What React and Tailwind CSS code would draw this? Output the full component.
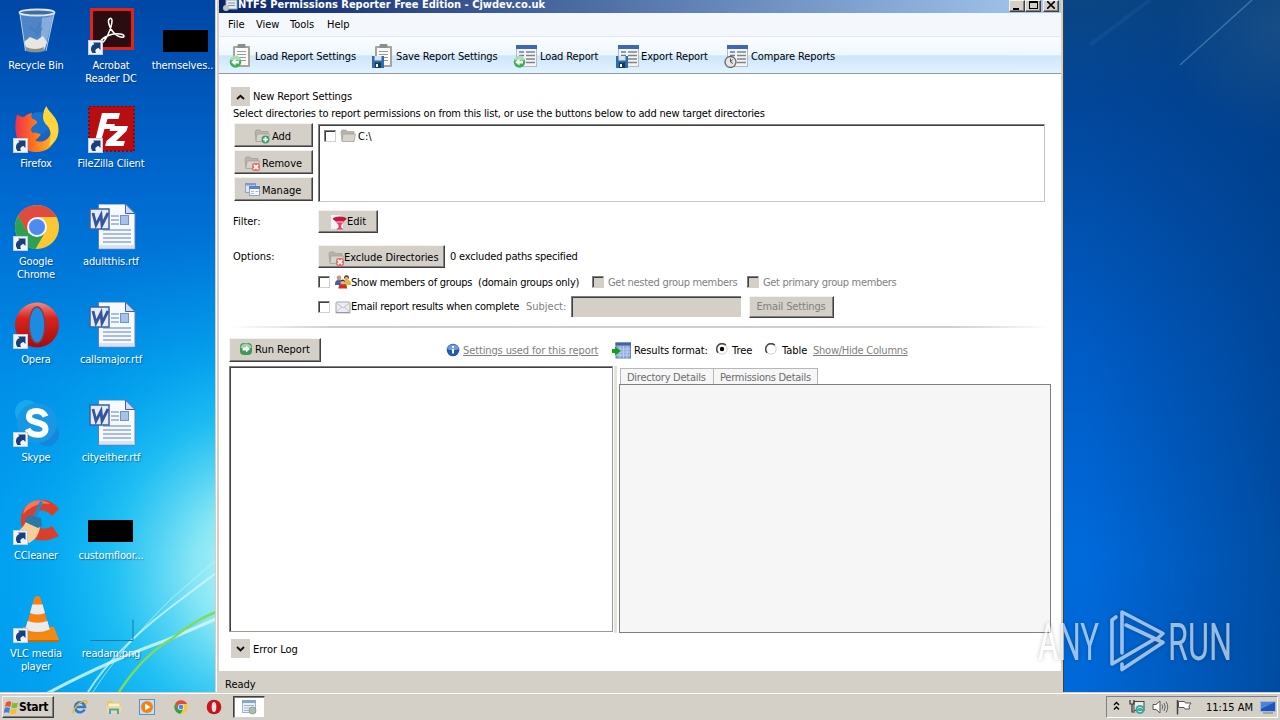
const FONT = "font-['DejaVu_Sans_Condensed','DejaVu_Sans',sans-serif]";

/* ---------- small window controls ---------- */

const Txt = ({ className = "", children }) => (
  <span className={`whitespace-pre leading-[13px] shrink-0 block ${className}`}>{children}</span>
);

const Button = ({ className = "", children }) => (
  <button
    className={`bg-[#d4d0c8] border border-t-[#f4f2ef] border-l-[#f4f2ef] border-r-[#404040] border-b-[#404040] shadow-[inset_-1px_-1px_0_#808080] flex items-center shrink-0 ${className}`}
  >
    {children}
  </button>
);

const Check = ({ disabled, className = "" }) => (
  <span
    className={`block w-[12px] h-[12px] shrink-0 border border-t-[#808080] border-l-[#808080] border-r-[#d4d0c8] border-b-[#d4d0c8] shadow-[inset_1px_1px_0_#404040] ${
      disabled ? "bg-[#d4d0c8]" : "bg-white"
    } ${className}`}
  />
);

const Radio = ({ checked, className = "" }) => (
  <svg viewBox="0 0 12 12" className={`w-[12px] h-[12px] shrink-0 ${className}`}>
    <circle cx="6" cy="6" r="5.2" fill="#fff" stroke="#d4d0c8" />
    <path d="M2.2 9.8A5.2 5.2 0 0 1 9.8 2.2" fill="none" stroke="#4a4845" strokeWidth="1.5" />
    {checked && <circle cx="6" cy="6" r="2.2" fill="#000" />}
  </svg>
);

const Expander = ({ up }) => (
  <span className="w-[19px] h-[19px] shrink-0 bg-[#d4d0c8] flex items-center justify-center">
    <svg viewBox="0 0 9 6" className="w-[9px] h-[6px]">
      <path d={up ? "M1 5L4.5 1.8 8 5" : "M1 1L4.5 4.4 8 1"} fill="none" stroke="#111" strokeWidth="1.9" />
    </svg>
  </span>
);

/* ---------- toolbar icons ---------- */

const Clipboard = () => (
  <g>
    <rect x="4" y="2" width="17" height="21" rx="1" fill="#aaa497" />
    <rect x="6" y="4" width="13" height="17" fill="#fafafa" />
    <rect x="8.5" y="0" width="8" height="4" rx="1" fill="#8d8d8d" />
    <path d="M8 7.500h9M8 10.500h9M8 13.500h9M8 16.500h9" stroke="#9a9a9a" />
  </g>
);

const Sheet = () => (
  <g>
    <rect x="3.500" y="1.500" width="20" height="21" fill="#f4f4f4" stroke="#b5b9c2" />
    <rect x="3" y="1" width="21" height="4" fill="#3f68b0" />
    <path d="M6 8h5M6 11.500h5M6 15h5M6 18.500h5" stroke="#5f7cb4" strokeWidth="1.600" />
    <path d="M13 8h9M13 11.500h9M13 15h9M13 18.500h9" stroke="#7f838b" strokeWidth="1.600" />
  </g>
);

const GreenArrow = () => (
  <g>
    <circle cx="6.500" cy="18" r="5.800" fill="#3fae5a" />
    <path d="M1.500 16.500a5 5 0 0 1 10 0z" fill="#a6dfb2" />
    <path d="M10 17H6.500v-2.200l-4.300 3.400 4.300 3.400v-2.200H10z" fill="#fff" />
  </g>
);

const Floppy = () => (
  <g>
    <rect x="1" y="12" width="12" height="12" fill="#2f6ba6" />
    <rect x="3.500" y="12" width="7" height="4.500" fill="#d5e2ee" />
    <rect x="4" y="18.500" width="6" height="5.500" fill="#16395f" />
    <rect x="5" y="20" width="2" height="3" fill="#fff" />
  </g>
);

const Clock = () => (
  <g>
    <circle cx="6.500" cy="18" r="5.500" fill="#e6e6e6" stroke="#666" strokeWidth="1.300" />
    <path d="M6.500 14.500V18l2.500 1.500M6.500 18l2-2.500" stroke="#555" fill="none" />
  </g>
);

const ToolItem = ({ base, badge, label, className }) => (
  <div className={`flex items-center shrink-0 ${className}`}>
    <svg viewBox="0 0 24 24" className="w-[24px] h-[24px] shrink-0">
      {base}
      {badge}
    </svg>
    <Txt className="tracking-[-0.12px]">{label}</Txt>
  </div>
);

/* ---------- form icons ---------- */

const FolderIcon = ({ badge, className = "" }) => (
  <svg viewBox="0 0 16 16" className={`w-[16px] h-[16px] shrink-0 ${className}`}>
    <path d="M1 4l1-2h4l1 1.500h7V13H2z" fill="#b9b4ad" stroke="#98938c" strokeWidth=".6" />
    <path d="M3 6h12.500L14 13.500H2z" fill="#d6d2cc" stroke="#9b9690" strokeWidth=".6" />
    {badge === "add" && (
      <g>
        <circle cx="11.500" cy="11.500" r="4" fill="#3f9f68" />
        <path d="M11.500 9v5M9 11.500h5" stroke="#fff" strokeWidth="1.700" />
      </g>
    )}
    {badge === "del" && (
      <g>
        <rect x="8" y="8" width="8" height="8" rx="2.500" fill="#e0726c" />
        <path d="M9.800 9.800l4.400 4.400M14.200 9.800l-4.400 4.400" stroke="#fff" strokeWidth="1.700" />
      </g>
    )}
  </svg>
);

const ManageIcon = () => (
  <svg viewBox="0 0 16 16" className="w-[16px] h-[16px] shrink-0">
    <rect x="1.500" y="1.500" width="10" height="9" fill="#dfe6f1" stroke="#93a3bf" />
    <rect x="1" y="1" width="11" height="2.500" fill="#7b9bd0" />
    <rect x="5.500" y="4.500" width="10" height="9" fill="#f4f7fb" stroke="#93a3bf" />
    <rect x="5" y="4" width="11" height="3" fill="#5b82c8" />
    <path d="M7 9.500h3M7 11.500h3M11.500 9.500h3" stroke="#a9b6cc" />
  </svg>
);

const FilterIcon = () => (
  <svg viewBox="0 0 16 16" className="w-[16px] h-[16px] shrink-0">
    <path d="M0 1h9l3 3v11H0z" fill="#f5f3f3" />
    <path d="M2 4.500h13.500l-5.300 6.500v2.500l2.500 2h-7.500L7.500 13.500V11z" fill="#e0456c" />
    <ellipse cx="8.700" cy="4.800" rx="6.800" ry="2.300" fill="#c01b45" />
    <path d="M5.500 8h6.500" stroke="#f5a3b7" strokeWidth="1.200" />
  </svg>
);

const GroupIcon = () => (
  <svg viewBox="0 0 16 16" className="w-[16px] h-[16px] shrink-0">
    <path d="M0 11c0-4 1-5 4-5s4 1 4 5z" fill="#3c5fae" />
    <circle cx="4" cy="4" r="2.400" fill="#c99d77" />
    <path d="M8 11c0-4 1-5 4-5s4 1 4 5z" fill="#e0b832" />
    <circle cx="11.500" cy="3.600" r="2.400" fill="#4b3a30" />
    <circle cx="11.500" cy="4.400" r="1.700" fill="#dcb28c" />
    <path d="M3.500 14.500c0-4 1.500-4.500 4.300-4.500s4.200.5 4.200 4.500z" fill="#d52e1e" />
    <circle cx="7.700" cy="8.300" r="2.300" fill="#e2b48d" />
    <path d="M5.300 8c0-3.400 4.800-3.400 4.800 0-1.500-1.200-3-1.200-4.800 0z" fill="#4a362a" />
  </svg>
);

const MailIcon = () => (
  <svg viewBox="0 0 16 16" className="w-[16px] h-[16px] shrink-0">
    <rect x="1" y="3" width="14" height="10.500" rx="1" fill="#ececf1" stroke="#a3a5b0" />
    <path d="M1.500 13L6.500 8M14.500 13L9.500 8M1.500 4l6.500 5 6.500-5" stroke="#bcbec9" fill="none" />
    <path d="M0.500 13.800h15" stroke="#9294a0" />
  </svg>
);

const RunIcon = () => (
  <svg viewBox="0 0 14 14" className="w-[14px] h-[14px] shrink-0">
    <rect x="1" y="1" width="12" height="12" rx="4" fill="#3c9a55" />
    <path d="M1.500 6c0-6 11-6 11 0z" fill="#9bd2a6" />
    <path d="M3.500 5.500H7v-2L11 7l-4 3.500v-2H3.500z" fill="#fff" />
  </svg>
);

const InfoIcon = () => (
  <svg viewBox="0 0 14 14" className="w-[14px] h-[14px] shrink-0">
    <circle cx="7" cy="7" r="6.300" fill="#2459b0" />
    <path d="M1.200 6a6 6 0 0 1 11.600 0q-6 2.500-11.600 0z" fill="#6f9bdc" />
    <path d="M7 3v1.800M7 6v4.500" stroke="#fff" strokeWidth="2" />
  </svg>
);

const GridIcon = () => (
  <svg viewBox="0 0 20 17" className="w-[20px] h-[17px] shrink-0">
    <rect x="4" y="1" width="14.500" height="15" fill="#8fabe0" stroke="#5f7fc0" />
    <rect x="3.500" y=".5" width="15.500" height="3" fill="#48629f" />
    <path d="M4 7h14.500M4 10h14.500M4 13h14.500M8 4v12M11.500 4v12M15 4v12" stroke="#c4d4f2" strokeWidth=".8" />
    <path d="M0 7h3V4.500L9 9l-6 4.500V11H0z" fill="#12a012" />
  </svg>
);

/* ---------- desktop icons (50x50 box) ---------- */

const Shortcut = () => (
  <g>
    <rect x="1.500" y="32.500" width="14" height="14" fill="#f2f5f8" stroke="#c3cfda" />
    <path d="M5.500 45c-2.500-3-2-7.500 2-9L6 34.500h7.500V42l-2-2c-3 .5-3.800 2.500-2.500 5z" fill="#173f7c" />
  </g>
);

const RecycleBin = () => (
  <g>
    <path d="M8 4L13.500 43Q24 46 33 43L43 5Z" fill="#8fb4dc" fillOpacity=".55" />
    <path d="M30 10L28 42l5-1L41 8z" fill="#d8e8f7" fillOpacity=".4" />
    <path d="M12 34l6-5 7 3 6-4 4 6-3 8q-9 3-17 0z" fill="#e9e6e1" />
    <path d="M14 39q9 4 18 0l-.5 3.500q-9 3-17 0z" fill="#918d88" />
    <path d="M17 19l7 5 4-9M30 20l-6 8" stroke="#3d78c4" strokeWidth="2" fill="none" opacity=".6" />
    <ellipse cx="25" cy="4.500" rx="17.500" ry="3" fill="#3e6ca6" stroke="#dde5ec" strokeWidth="1.800" />
    <path d="M8 6L13.500 43M42 6L34 43" stroke="#b9d0e8" />
  </g>
);

const Acrobat = () => (
  <g>
    <rect x="3" y="0" width="44" height="42" fill="#e2231a" />
    <rect x="6" y="3" width="38" height="36" fill="#2b0c10" />
    <path
      d="M13 34c3-5 11-9 20-8 5 .6 5 3.500 2 3.300-6-.5-12-7-13.500-15C21 10 25 9 25 12.500c0 7-6 20-10 22.500-2 1-3 0-2-1z"
      fill="none"
      stroke="#fff"
      strokeWidth="1.500"
    />
    <Shortcut />
  </g>
);

const Firefox = () => (
  <g>
    <circle cx="26" cy="25" r="15" fill="#1c61c4" />
    <circle cx="27" cy="17" r="11" fill="#1672cc" />
    <path
      d="M5 8c1 1 4 3 7 3 3-3 6-4 8-4-1 3-1 5 1 6 3 1 4 2 4 4-2 2-5 3-6 6 0 2 1 3 2 4 2-1 6 0 8 2-2 1-3 4-6 5 6 4 14 0 16-7 1-7-2-11-5-15C33 8 33 4 34 1c1 4 3 6 6 10 9 14 4 36-17 35C7 45 0 29 5 8z"
      fill="url(#fx)"
    />
    <path d="M31 12c0-5 1-9 3.500-12 2 7 13 11 12 25-.5 8-5 13-10 15 4-9 2-17-1-20-3-3-4-5-4.500-8z" fill="#ffd53a" />
    <Shortcut />
  </g>
);

const FileZilla = () => (
  <g>
    <rect x="2" y="0" width="45" height="45" fill="#b90d10" stroke="#8c0609" strokeWidth="2" strokeDasharray="2 2" />
    <path d="M15 7h18l-1.500 6H20.500l-1.500 5h9l-1.500 5h-9L14 35H8z" fill="#fff" />
    <path d="M24 20h17l-1.500 5L29 35h9l-1.500 5H18l1.500-5L31 25h-8.500z" fill="#fff" />
    <Shortcut />
  </g>
);

const Chrome = () => (
  <g>
    <circle cx="25" cy="23" r="22" fill="#fbc834" />
    <path d="M25 1A22 22 0 0 0 6 12l9.500 17L25 13h20A22 22 0 0 0 25 1z" fill="#df4b3f" />
    <path d="M6 12a22 22 0 0 0 17.500 33L33 28.500l-8 4.500-9.500-4.500z" fill="#2da151" />
    <circle cx="25" cy="23" r="10" fill="#f4f6f8" />
    <circle cx="25" cy="23" r="8" fill="#4f8af0" />
  </g>
);

const OperaMark = () => (
  <g>
    <ellipse cx="25" cy="23" rx="22" ry="22.500" fill="url(#op)" />
    <ellipse cx="25" cy="23" rx="8" ry="18" fill="#1c8be0" stroke="#8a3a48" strokeWidth="1.500" />
  </g>
);

const Skype = () => (
  <g>
    <circle cx="15" cy="12" r="12" fill="#16a9ec" />
    <circle cx="35" cy="34" r="12" fill="#1686dc" />
    <circle cx="25" cy="23" r="20" fill="#1897e4" />
    <path
      d="M33.500 16.500C31 9 17 9 17 16.500 17 24.500 33.500 20.500 33.500 29c0 8-14.500 7.500-18 0"
      fill="none"
      stroke="#fff"
      strokeWidth="6"
    />
    <Shortcut />
  </g>
);

const CCleaner = () => (
  <g>
    <path d="M47 11C38-3 12-2 9 19c-2 20 17 30 38 19l-7-10c-9 6-18 1-18-7 0-9 10-12 18-3z" fill="#d93f2b" />
    <path d="M38 6c-9-7-25-4-27 10 8-8 18-12 27-10z" fill="#ef7a60" />
    <path d="M14 23l14 6c-1 8-5 13-11 16L1 36c6-3 11-7 13-13z" fill="#f6cf98" />
    <path d="M14 20l4-3 11 3 1 8-4 2-13-6z" fill="#2f76a8" />
    <path d="M21 18L28 3l3 1-6 15z" fill="#2c86c4" />
    <Shortcut />
  </g>
);

const Vlc = () => (
  <g>
    <path d="M11 31h31l5 13H6z" fill="#f08a12" />
    <path d="M6 44h41v2H6z" fill="#c96a06" />
    <path d="M25.500 0Q28 0 28.800 3L38 35q-12 6-25 0L22 3q.8-3 3.500-3z" fill="#f58211" />
    <path d="M20.300 8.500h10.300L33 17q-7.500 3-15 0zM15.500 25q10 3.500 20 0l2.200 8.500q-12 5-24.500 0z" fill="#e9ebee" />
    <Shortcut />
  </g>
);

const WordDoc = () => (
  <g>
    <path d="M11.500 0h27L48 9.500V45h-36.500z" fill="#f6f9fe" stroke="#5e7fb8" />
    <path d="M38.500 0v9.500H48z" fill="#cfdcf2" stroke="#3e62a4" />
    <path d="M24 12h8M24 16h8M24 20h8M16 26h28M16 30h28M16 34h28M16 38h28" stroke="#8fa6d6" strokeWidth="1.300" />
    <rect x="33.500" y="11.500" width="8" height="9" fill="#a6c2ea" stroke="#6f92ca" />
    <path d="M12 41h36v4H12z" fill="#c5d4ee" opacity=".6" />
    <rect x="3" y="5" width="19" height="20" fill="#e6edfa" stroke="#3d5fa8" strokeWidth="1.500" />
    <path d="M6 9l3 12 5-10 1 10 6-12" fill="none" stroke="#35549c" strokeWidth="2.800" />
  </g>
);

const BlackThumb = () => <path d="M1 22h45v22H1z" fill="#000" />;

const EmptyThumb = () => <path d="M3 44.500h43v-21" fill="none" stroke="#187aa0" />;

const desktopIcons = [
  { label: "Recycle Bin", icon: <RecycleBin /> },
  { label: "Firefox", icon: <Firefox /> },
  { label: "Google\nChrome", icon: <><Chrome /><Shortcut /></> },
  { label: "Opera", icon: <><OperaMark /><Shortcut /></> },
  { label: "Skype", icon: <Skype /> },
  { label: "CCleaner", icon: <CCleaner /> },
  { label: "VLC media\nplayer", icon: <Vlc /> },
  { label: "Acrobat\nReader DC", icon: <Acrobat /> },
  { label: "FileZilla Client", icon: <FileZilla /> },
  { label: "adultthis.rtf", icon: <WordDoc /> },
  { label: "callsmajor.rtf", icon: <WordDoc /> },
  { label: "cityeither.rtf", icon: <WordDoc /> },
  { label: "customfloor...", icon: <BlackThumb /> },
  { label: "readam.png", icon: <EmptyThumb /> },
  { label: "themselves..", icon: <BlackThumb />, labelClass: "pr-[8px]" },
];

const DesktopIcon = ({ label, icon, labelClass = "pr-px" }) => (
  <div className="flex flex-col items-center pt-[8px] h-[98px] w-[75px]">
    <svg viewBox="0 0 50 50" className="w-[50px] h-[50px] shrink-0">
      {icon}
    </svg>
    <span
      className={`mt-px whitespace-pre text-center leading-[13px] tracking-[-0.15px] text-white [text-shadow:1px_1px_1px_rgba(0,30,80,0.5)] ${labelClass}`}
    >
      {label}
    </span>
  </div>
);

const Wallpaper = () => (
  <svg viewBox="0 0 1280 692" className="absolute inset-0 w-full h-[692px]">
    <defs>
      <linearGradient id="left" x1="0" y1="0" x2="0" y2="1">
        <stop offset="0" stopColor="#0047a6" />
        <stop offset=".27" stopColor="#0068cf" />
        <stop offset=".55" stopColor="#008ee8" />
        <stop offset=".8" stopColor="#009ef2" />
        <stop offset="1" stopColor="#009cf0" />
      </linearGradient>
      <radialGradient id="glow" gradientUnits="userSpaceOnUse" cx="270" cy="570" r="350">
        <stop offset="0" stopColor="#d4fafa" />
        <stop offset=".22" stopColor="#8eeaf5" stopOpacity=".95" />
        <stop offset=".45" stopColor="#28c8f4" stopOpacity=".8" />
        <stop offset=".65" stopColor="#08b2f2" stopOpacity=".5" />
        <stop offset="1" stopColor="#0090e8" stopOpacity="0" />
      </radialGradient>
      <linearGradient id="right" gradientUnits="userSpaceOnUse" x1="1064" y1="0" x2="1064" y2="692">
        <stop offset="0" stopColor="#0a4583" />
        <stop offset=".15" stopColor="#02469a" />
        <stop offset=".5" stopColor="#005bc4" />
        <stop offset=".8" stopColor="#006adb" />
        <stop offset="1" stopColor="#0068d8" />
      </linearGradient>
      <linearGradient id="shade" x1="0" y1="0" x2="1" y2="0">
        <stop offset=".1" stopColor="#003a80" stopOpacity="0" />
        <stop offset="1" stopColor="#003a80" stopOpacity=".62" />
      </linearGradient>
      <radialGradient id="haze" gradientUnits="userSpaceOnUse" cx="1280" cy="30" r="110">
        <stop offset="0" stopColor="#2a5c88" stopOpacity=".5" />
        <stop offset="1" stopColor="#2a5c88" stopOpacity="0" />
      </radialGradient>
      <linearGradient id="fx" x1="0" y1="0" x2="1" y2="0">
        <stop offset="0" stopColor="#f0304a" />
        <stop offset=".5" stopColor="#ff7a1c" />
        <stop offset="1" stopColor="#ffc42c" />
      </linearGradient>
      <linearGradient id="op" x1="0" y1="0" x2="0" y2="1">
        <stop offset="0" stopColor="#f08a80" />
        <stop offset=".35" stopColor="#d8231f" />
        <stop offset="1" stopColor="#a30d0d" />
      </linearGradient>
    </defs>
    <rect width="640" height="692" fill="url(#left)" />
    <rect width="640" height="692" fill="url(#glow)" />
    <rect x="640" width="640" height="692" fill="url(#right)" />
    <rect x="1064" width="216" height="692" fill="url(#shade)" />
    <rect x="1064" width="216" height="692" fill="url(#haze)" />
    <path d="M1180 65L1252 0" stroke="#4d86b8" strokeWidth="1.500" opacity=".7" />
    <path d="M1090 45L1150 0" stroke="#2f6db0" strokeWidth="4" opacity=".2" />
    <path d="M46 694Q110 660 167 640L216 619" fill="none" stroke="#d4f6fc" strokeWidth="3" opacity=".85" />
    <path d="M88 692Q113 652 167 610L216 573" fill="none" stroke="#d4f8fc" strokeWidth="2" opacity=".75" />
    <path d="M93 692Q118 652 170 600L216 560" fill="none" stroke="#c9f6fb" opacity=".7" />
    <path d="M119 692Q143 655 173 638Q195 620 216 612" fill="none" stroke="#7edc5a" strokeWidth="2.500" />
  </svg>
);

/* ---------- application window ---------- */

const TitleBar = () => (
  <div className="h-[13px] shrink-0 flex items-start pl-[3px] pr-[2px] bg-[linear-gradient(to_right,#0a246a,#a6caf0)]">
    <svg viewBox="0 0 16 12" className="w-[16px] h-[12px] shrink-0">
      <rect x="4" y="0" width="11" height="9" fill="#e8edf2" stroke="#9aa7ba" />
      <path d="M6 3h7M6 5.500h7" stroke="#7f93b3" />
      <circle cx="4" cy="8" r="3" fill="#bcc6c9" />
    </svg>
    <Txt className="text-white font-bold -mt-[2px] flex-1">NTFS Permissions Reporter Free Edition - Cjwdev.co.uk</Txt>
    <Button className="w-[16px] h-[12px] justify-center">
      <span className="w-[6px] h-[2px] bg-black mt-[5px] -ml-[2px]" />
    </Button>
    <Button className="w-[16px] h-[12px] justify-center">
      <span className="w-[9px] h-[8px] border border-t-2 border-black -mt-[2px]" />
    </Button>
    <Button className="w-[16px] h-[12px] justify-center ml-[2px]">
      <svg viewBox="0 0 8 8" className="w-[8px] h-[8px] -mt-[2px]">
        <path d="M0 0L8 8M8 0L0 8" stroke="#000" strokeWidth="1.600" />
      </svg>
    </Button>
  </div>
);

const Toolbar = () => (
  <div className="h-[38px] shrink-0 flex items-center pl-[10px] pt-[2px] border-t border-t-[#e3e8ef] border-b border-b-[#8f9aa5] bg-[linear-gradient(to_bottom,#fafdff_0%,#eef7fe_50%,#cce6fb_52%,#e2f3fe_100%)]">
    <ToolItem base={<Clipboard />} badge={<GreenArrow />} label="Load Report Settings" className="w-[142px] gap-[2px]" />
    <ToolItem base={<Clipboard />} badge={<Floppy />} label="Save Report Settings" className="w-[142px] gap-[1px]" />
    <ToolItem base={<Sheet />} badge={<GreenArrow />} label="Load Report" className="w-[102px] gap-[3px]" />
    <ToolItem base={<Sheet />} badge={<Floppy />} label="Export Report" className="w-[109px] gap-[2px]" />
    <ToolItem base={<Sheet />} badge={<Clock />} label="Compare Reports" className="gap-[3px]" />
  </div>
);

const Settings = () => (
  <div className="shrink-0 flex flex-col h-[255px] pt-[13px]">
    <div className="flex items-center h-[19px] pl-[12px] gap-[3px]">
      <Expander up />
      <Txt className="tracking-[-0.12px]">New Report Settings</Txt>
    </div>
    <Txt className="pl-[14px] mt-[1px] tracking-[-0.18px]">
      Select directories to report permissions on from this list, or use the buttons below to add new target directories
    </Txt>
    <div className="flex pl-[15px] mt-[3px] gap-[5px]">
      <div className="flex flex-col gap-[3px]">
        <Button className="w-[79px] h-[24px] pl-[19px] pt-[2px] gap-[2px]">
          <FolderIcon badge="add" />
          <Txt>Add</Txt>
        </Button>
        <Button className="w-[79px] h-[24px] pl-[9px] pt-[2px] gap-[2px]">
          <FolderIcon badge="del" />
          <Txt>Remove</Txt>
        </Button>
        <Button className="w-[79px] h-[24px] pl-[9px] pt-[2px] gap-[2px]">
          <ManageIcon />
          <Txt>Manage</Txt>
        </Button>
      </div>
      <div className="mt-px w-[727px] h-[78px] bg-white border border-t-[#808080] border-l-[#808080] shadow-[inset_1px_1px_0_#404040] border-r-[#c8c5bf] border-b-[#c8c5bf]">
        <div className="flex items-center pt-[2px] pl-[5px] h-[20px]">
          <Check />
          <FolderIcon className="ml-[4px]" />
          <Txt className="ml-[2px] pt-[1px]">C:\</Txt>
        </div>
      </div>
    </div>
    <div className="flex items-center h-[23px] pl-[14px] mt-[8px]">
      <Txt className="w-[85px]">Filter:</Txt>
      <Button className="w-[60px] h-[23px] pl-[12px]">
        <FilterIcon />
        <Txt className="pb-px">Edit</Txt>
      </Button>
    </div>
    <div className="flex items-center h-[23px] pl-[14px] mt-[12px]">
      <Txt className="w-[85px]">Options:</Txt>
      <Button className="w-[127px] h-[23px] pl-[9px] pt-[2px]">
        <FolderIcon badge="del" />
        <Txt className="tracking-[-0.06px]">Exclude Directories</Txt>
      </Button>
      <Txt className="ml-[5px] tracking-[-0.18px]">0 excluded paths specified</Txt>
    </div>
    <div className="flex items-center h-[16px] pl-[99px] mt-[6px]">
      <Check />
      <div className="w-[262px] flex items-center pl-[5px]">
        <GroupIcon />
        <Txt className="tracking-[-0.24px]">Show members of groups  (domain groups only)</Txt>
      </div>
      <Check disabled />
      <Txt className="w-[143px] pl-[4px] text-[#808080] tracking-[-0.3px]">Get nested group members</Txt>
      <Check disabled />
      <Txt className="pl-[4px] text-[#808080] tracking-[-0.33px]">Get primary group members</Txt>
    </div>
    <div className="flex items-center h-[23px] pl-[99px] mt-[5px]">
      <Check />
      <div className="w-[196px] flex items-center pl-[5px]">
        <MailIcon />
        <Txt className="tracking-[-0.24px]">Email report results when complete</Txt>
      </div>
      <Txt className="w-[45px] text-[#808080]">Subject:</Txt>
      <div className="w-[170px] h-[21px] bg-[#d4d0c8] border-t border-l border-t-[#808080] border-l-[#808080] shadow-[inset_1px_1px_0_#404040]" />
      <Button className="w-[85px] h-[22px] ml-[8px] justify-center text-[#808080]">
        <Txt className="tracking-[-0.15px] pr-px">Email Settings</Txt>
      </Button>
    </div>
    <div className="h-[2px] ml-[12px] w-[820px] mt-[8px] shrink-0 bg-[linear-gradient(to_right,transparent,#cfcfcf_12%,#cfcfcf_88%,transparent)]" />
  </div>
);

const ResultsBar = () => (
  <div className="flex items-center h-[24px] mt-[9px] pl-[10px] shrink-0">
    <div className="w-[217px]">
      <Button className="w-[92px] h-[24px] pl-[9px] pb-[2px] gap-[2px]">
        <RunIcon />
        <Txt>Run Report</Txt>
      </Button>
    </div>
    <div className="w-[166px] flex items-center gap-[3px] text-[#808080]">
      <InfoIcon />
      <Txt className="underline tracking-[-0.12px]">Settings used for this report</Txt>
    </div>
    <GridIcon />
    <Txt className="w-[84px] pl-[2px] tracking-[-0.1px]">Results format:</Txt>
    <Radio checked className="-mt-[2px]" />
    <Txt className="w-[37px] pl-[4px]">Tree</Txt>
    <Radio className="-mt-[2px]" />
    <Txt className="w-[36px] pl-[5px]">Table</Txt>
    <Txt className="underline text-[#808080] tracking-[-0.24px]">Show/Hide Columns</Txt>
  </div>
);

const Tab = ({ className, children }) => (
  <div className={`h-[17px] flex items-center pl-[6px] border border-b-0 border-[#b7b7b7] bg-[#f6f6f6] text-[#6d6d6d] ${className}`}>
    <Txt className="tracking-[-0.26px] pt-px">{children}</Txt>
  </div>
);

const Panes = () => (
  <div className="flex h-[267px] mt-[4px] pl-[10px] shrink-0">
    <div className="w-[384px] h-[266px] bg-white border border-t-[#808080] border-l-[#808080] shadow-[inset_1px_1px_0_#404040] border-r-[#9b9995] border-b-[#9b9995]" />
    <div className="w-[3px] ml-[1px] bg-[#e3e1dd]" />
    <div className="ml-[2px] w-[432px] flex flex-col pt-[2px]">
      <div className="flex pl-[1px]">
        <Tab className="w-[94px]">Directory Details</Tab>
        <Tab className="w-[104px] border-l-0">Permissions Details</Tab>
      </div>
      <div className="flex-1 -mt-px bg-[#f6f6f6] border border-[#7f7f7f]" />
    </div>
  </div>
);

const AppWindow = () => (
  <div className="w-[849px] h-[692px] shrink-0 flex bg-white border-l border-l-[#d4d0c8] border-r border-r-[#404040]">
    <div className="flex-1 flex flex-col ml-px border-l-2 border-r-2 border-l-[#d4d0c8] border-r-[#d4d0c8]">
      <TitleBar />
      <div className="h-[23px] shrink-0 flex items-center pl-[9px] pb-[1px] bg-[#f4f7fc]">
        <Txt className="w-[28px]">File</Txt>
        <Txt className="w-[34px]">View</Txt>
        <Txt className="w-[37px]">Tools</Txt>
        <Txt>Help</Txt>
      </div>
      <Toolbar />
      <div className="h-[597px] shrink-0 flex flex-col bg-white">
        <Settings />
        <ResultsBar />
        <Panes />
        <div className="flex items-center h-[19px] mt-[6px] pl-[12px] gap-[3px]">
          <Expander />
          <Txt className="pt-px">Error Log</Txt>
        </div>
      </div>
      <div className="flex-1 flex items-center pl-[6px] pt-[5px] bg-[#d4d0c8]">
        <Txt>Ready</Txt>
      </div>
    </div>
  </div>
);

/* ---------- taskbar ---------- */

const WindowsFlag = () => (
  <svg viewBox="0 0 16 15" className="w-[16px] h-[15px] shrink-0">
    <path d="M3 2.500Q6 .5 8.300 2L7.300 7Q4.500 5.500 2 7z" fill="#e8552b" />
    <path d="M9.300 2.500Q12 4 15 2.500L14 7.500Q11 9 8.300 7.500z" fill="#7fbb3a" />
    <path d="M1.800 8Q4.500 6.500 7 8L6 13Q3.500 11.500 .8 13z" fill="#3f7fd6" />
    <path d="M8 8.500q2.800 1.500 5.700 0l-1 5q-3 1.500-5.700 0z" fill="#f6bd2c" />
  </svg>
);

const IeIcon = () => (
  <svg viewBox="0 0 16 16" className="w-[16px] h-[16px]">
    <path d="M12.500 10.500A5 5 0 1 1 13 8H4" fill="none" stroke="#2a7bd0" strokeWidth="2.600" />
    <path d="M1.500 14.500C-.5 12 7 2 14 1.500c2 .5.500 3-.5 4" fill="none" stroke="#e8b830" strokeWidth="1.300" />
  </svg>
);

const ExplorerIcon = () => (
  <svg viewBox="0 0 16 16" className="w-[16px] h-[16px]">
    <path d="M1 2h5l1 1.500h7.500V14H1z" fill="#e6c768" />
    <rect x="2.500" y="4.500" width="11" height="5" fill="#f7f2d8" />
    <path d="M1 7h14v7H1z" fill="#f4dc8a" />
    <path d="M4 15v-4.500h8V15" fill="none" stroke="#4aa3d8" strokeWidth="2" />
  </svg>
);

const PlayerIcon = () => (
  <svg viewBox="0 0 16 16" className="w-[16px] h-[16px]">
    <rect x=".5" y=".5" width="15" height="15" fill="#c8def2" stroke="#5d92c9" />
    <circle cx="8" cy="8" r="6" fill="#ee8415" />
    <path d="M6.200 4.800v6.400L11.500 8z" fill="#fff" />
  </svg>
);

const ReporterIcon = () => (
  <svg viewBox="0 0 16 16" className="w-[16px] h-[16px]">
    <rect x="1.500" y="1.500" width="13" height="12" fill="#eaf0f8" stroke="#9fb2cd" />
    <rect x="1" y="1" width="14" height="3" fill="#86a5d3" />
    <path d="M3 6.500h10M3 9h7M3 11.500h5" stroke="#a3b3cb" />
    <circle cx="11.500" cy="11.500" r="3.500" fill="#a9bfae" stroke="#7f8f86" strokeWidth=".7" />
  </svg>
);

const Tray = () => (
  <div className="w-[172px] h-[22px] flex items-center pl-[6px] border border-t-[#808080] border-l-[#808080] border-r-white border-b-white">
    <svg viewBox="0 0 7 10" className="w-[7px] h-[10px] -mt-[3px]">
      <path d="M1 4l2.500-2.500L6 4M1 8.500L3.500 6 6 8.500" fill="none" stroke="#000" strokeWidth="1.300" />
    </svg>
    <svg viewBox="0 0 16 16" className="w-[16px] h-[16px] ml-[9px]">
      <rect x="5" y="2.500" width="10" height="9" fill="#e8ecec" stroke="#444" />
      <path d="M1 1v4h4V1M3 5v8h3" fill="none" stroke="#333" strokeWidth="1.200" />
      <circle cx="11" cy="10.500" r="4.500" fill="#3fa69c" />
      <path d="M8.500 9.500q2.500-3 5 0M9 12q2 1.500 4 0" stroke="#c9efe6" fill="none" />
    </svg>
    <svg viewBox="0 0 17 16" className="w-[17px] h-[16px] ml-[7px]">
      <path d="M1 5.500h3L8 2v12l-4-3.500H1z" fill="#fff" stroke="#555" />
      <path d="M10 5.500q1.500 2.500 0 5M12 4q2.500 4 0 8M14 2.500q3.500 5.500 0 11" fill="none" stroke="#666" />
    </svg>
    <svg viewBox="0 0 16 16" className="w-[16px] h-[16px] ml-[7px]">
      <path d="M1.500 1v14.500" stroke="#444" strokeWidth="1.500" />
      <path d="M2.500 2.500h6l1 1.500h5.500l-2 3 .5 3H9L8 8.500H2.500z" fill="#fff" stroke="#555" />
    </svg>
    <Txt className="ml-[14px] w-[54px]">11:15 AM</Txt>
    <svg viewBox="0 0 16 14" className="w-[16px] h-[14px]">
      <rect x=".5" y="1.500" width="15" height="10" fill="#1f55b5" stroke="#9fb8dc" />
      <path d="M1 2h14L1 9z" fill="#4c83d8" />
      <path d="M3 13h10" stroke="#777" />
    </svg>
  </div>
);

const Taskbar = () => (
  <div className="h-[28px] shrink-0 flex items-center pt-[1px] pl-[2px] pr-[2px] bg-[#d4d0c8] border-t border-t-[#d4d0c8] shadow-[inset_0_1px_0_#fff]">
    <Button className="w-[52px] h-[22px] font-bold">
      <WindowsFlag />
      <Txt className="text-[12px] tracking-[-0.3px]">Start</Txt>
    </Button>
    <div className="flex items-center gap-[17.5px] ml-[18px]">
      <IeIcon />
      <ExplorerIcon />
      <PlayerIcon />
      <svg viewBox="2 0 46 46" className="w-[14px] h-[14px] mx-px"><Chrome /></svg>
      <svg viewBox="0 0 48 46" className="w-[16px] h-[16px]">
        <circle cx="24" cy="23" r="22" fill="#c4161c" />
        <ellipse cx="24" cy="23" rx="7" ry="15" fill="#f3dede" />
      </svg>
    </div>
    <div className="ml-[11px] w-[32px] h-[22px] flex items-center justify-center bg-white border border-t-[#404040] border-l-[#404040] border-r-[#d4d0c8] border-b-[#d4d0c8] shadow-[inset_1px_1px_0_#808080]">
      <ReporterIcon />
    </div>
    <div className="flex-1" />
    <Tray />
  </div>
);

const Watermark = () => (
  <svg
    viewBox="0 0 210 74"
    className="absolute left-[1038px] top-[604px] w-[210px] h-[74px] overflow-visible opacity-60 drop-shadow-[0_0_2px_rgba(0,0,0,0.4)]"
  >
    <g fill="none" stroke="#fff" strokeWidth="3.600" strokeLinejoin="round" strokeLinecap="round">
      <path d="M78 13L74 16V60L115 36" />
      <path d="M84 49V8L125 29.500L120 34" />
      <path d="M88 21L125 38.500L84 65.500V60" />
    </g>
    <g fill="#fff" fontSize="51" fontFamily="Roboto">
      <text x="0" y="56" textLength="61" lengthAdjust="spacingAndGlyphs">ANY</text>
      <text x="130" y="56" textLength="64" lengthAdjust="spacingAndGlyphs">RUN</text>
    </g>
  </svg>
);

export default function App() {
  return (
    <div className={`relative w-[1280px] h-[720px] overflow-hidden flex flex-col text-[11px] text-black ${FONT}`}>
      <Wallpaper />
      <div className="relative h-[692px] shrink-0 flex">
        <div className="w-[215px] h-[692px] shrink-0 overflow-hidden">
          <div className="grid grid-flow-col grid-rows-[repeat(7,98px)] auto-cols-[75px] -ml-[1px]">
            {desktopIcons.map((item) => (
              <DesktopIcon key={item.label} {...item} />
            ))}
          </div>
        </div>
        <AppWindow />
      </div>
      <div className="relative shrink-0">
        <Taskbar />
      </div>
      <Watermark />
    </div>
  );
}
